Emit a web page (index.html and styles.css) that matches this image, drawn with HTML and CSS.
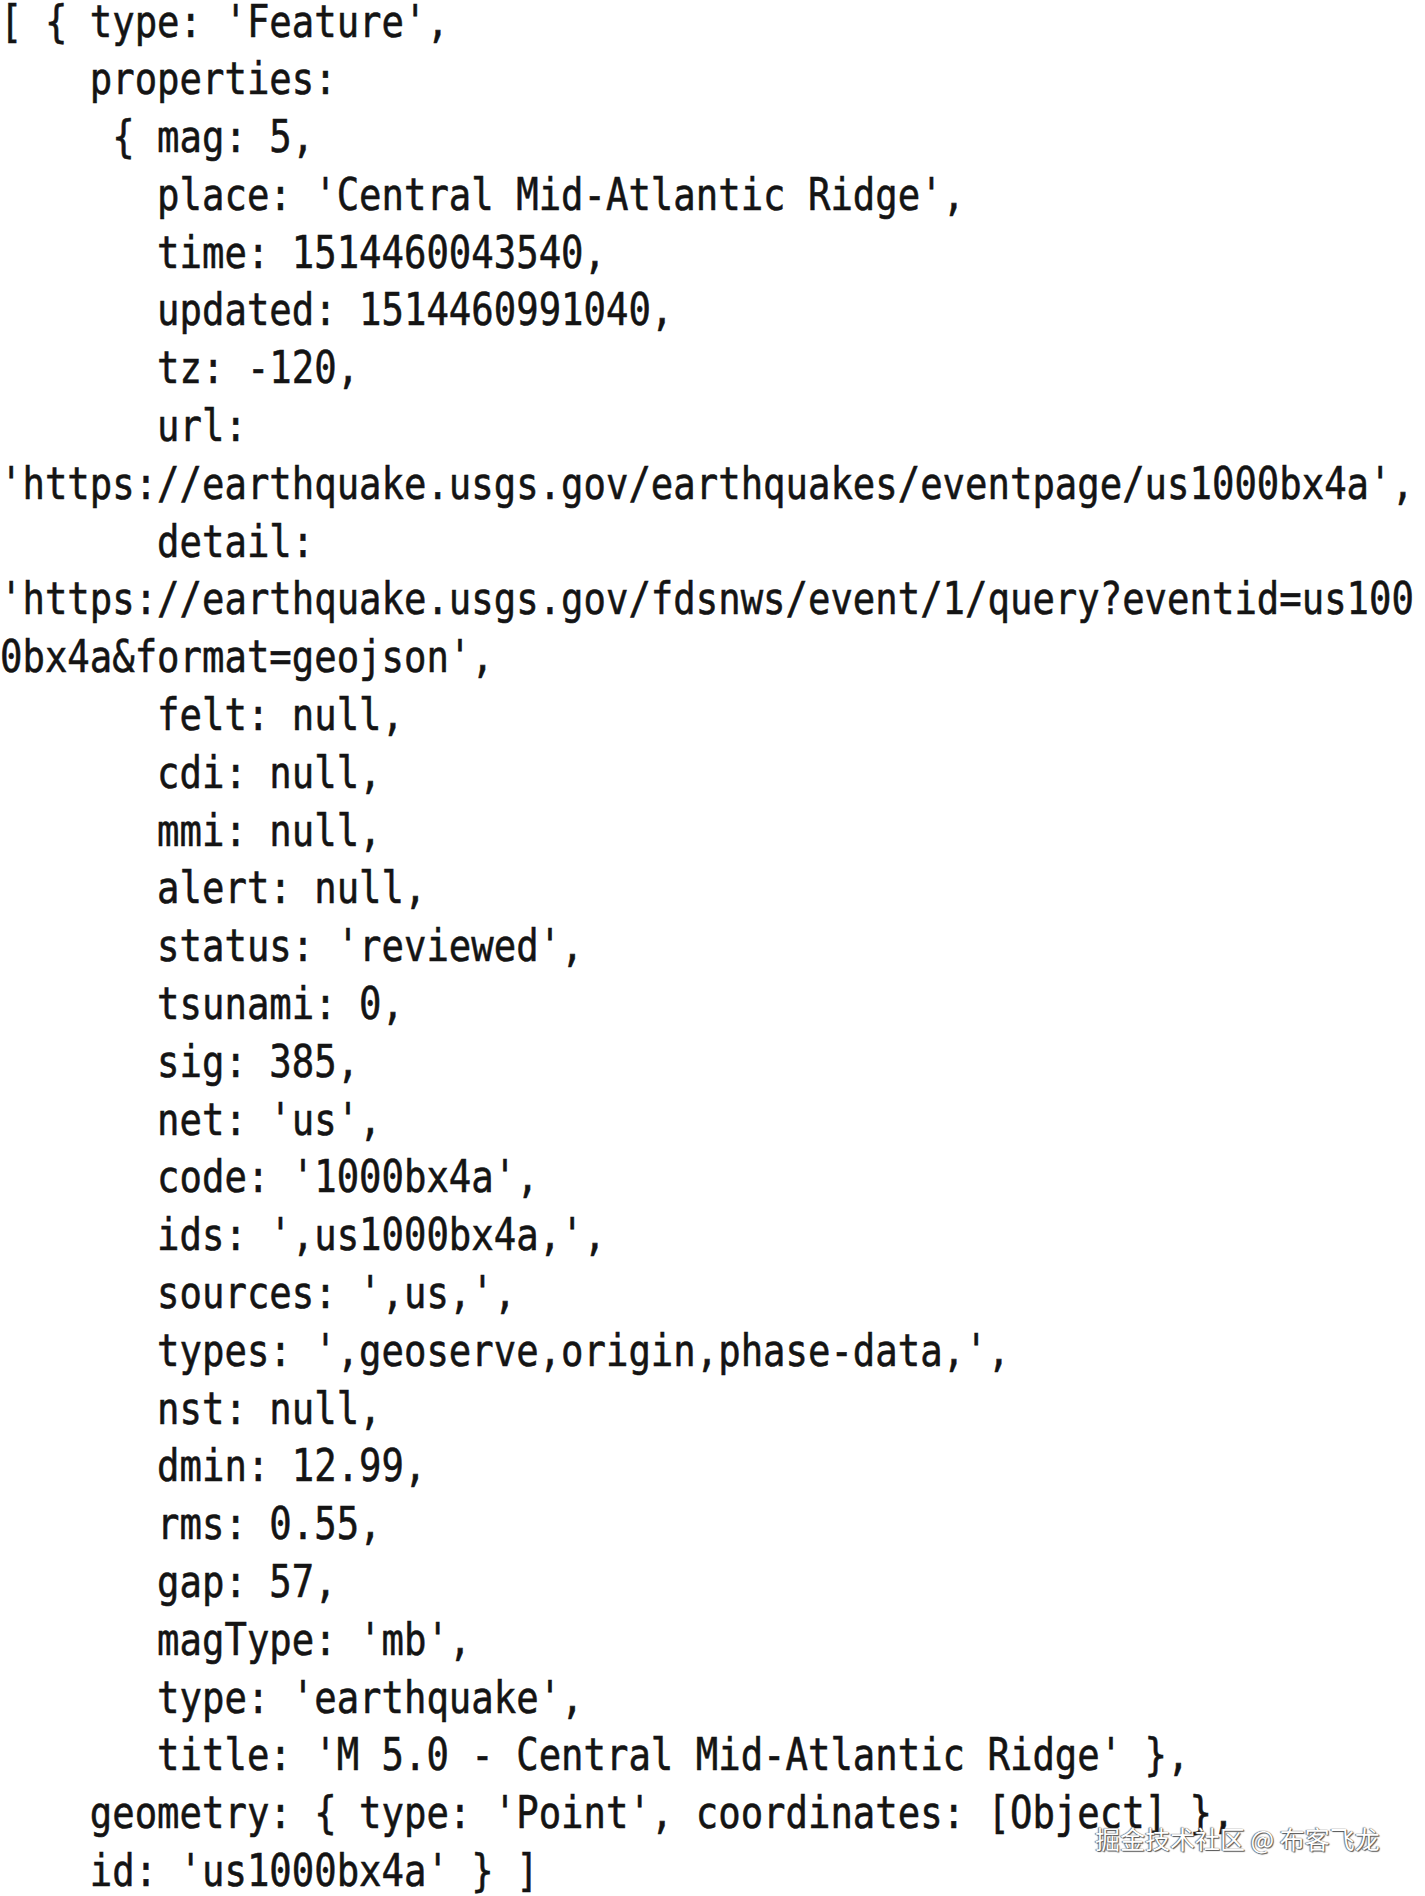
FILE: index.html
```html
<!DOCTYPE html>
<html lang="en">
<head>
<meta charset="utf-8">
<title>Feature</title>
<link rel="stylesheet" href="styles.css">
</head>
<body>
<main class="page">
<pre class="code">[ { type: 'Feature',
    properties:
     { mag: 5,
       place: 'Central Mid-Atlantic Ridge',
       time: 1514460043540,
       updated: 1514460991040,
       tz: -120,
       url:
'https://earthquake.usgs.gov/earthquakes/eventpage/us1000bx4a',
       detail:
'https://earthquake.usgs.gov/fdsnws/event/1/query?eventid=us100
0bx4a&amp;format=geojson',
       felt: null,
       cdi: null,
       mmi: null,
       alert: null,
       status: 'reviewed',
       tsunami: 0,
       sig: 385,
       net: 'us',
       code: '1000bx4a',
       ids: ',us1000bx4a,',
       sources: ',us,',
       types: ',geoserve,origin,phase-data,',
       nst: null,
       dmin: 12.99,
       rms: 0.55,
       gap: 57,
       magType: 'mb',
       type: 'earthquake',
       title: 'M 5.0 - Central Mid-Atlantic Ridge' },
    geometry: { type: 'Point', coordinates: [Object] },
    id: 'us1000bx4a' } ]</pre>
<div class="watermark">掘金技术社区 @ 布客飞龙</div>
</main>
</body>
</html>
```

FILE: styles.css
```css
html, body {
  margin: 0;
  padding: 0;
  background: #ffffff;
  overflow: hidden;
  height: 1896px;
}

.page {
  position: relative;
  width: 1425px;
  height: 1896px;
  overflow: hidden;
}

.code {
  width: 1720px;
  margin: -7.5px 0 0 0;
  padding: 0;
  font-family: "DejaVu Sans Mono", "Liberation Mono", monospace;
  font-size: 45px;
  line-height: 57.8px;
  color: #141414;
  -webkit-text-stroke: 0.6px #141414;
  white-space: pre;
  overflow: hidden;
  transform: scaleX(0.8284);
  transform-origin: 0 0;
}

.watermark {
  position: absolute;
  left: 1095px;
  top: 1823px;
  font-family: "Noto Sans CJK SC", "Noto Sans", sans-serif;
  font-size: 25px;
  line-height: 30px;
  color: #ffffff;
  white-space: nowrap;
  text-shadow: 0 0 1px #444, 1px 1px 1px #555, -1px 0 1px #888;
}
```
